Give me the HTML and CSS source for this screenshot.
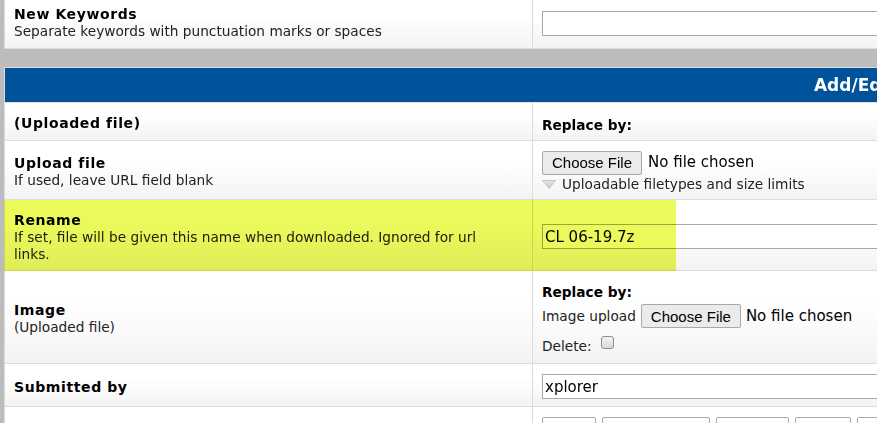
FILE: index.html
```html
<!DOCTYPE html>
<html lang="en">
<head>
    <meta charset="UTF-8">
    <meta name="viewport" content="width=device-width, initial-scale=1.0">
    <title>Add/Edit File</title>
    <link rel="stylesheet" href="styles.css">
</head>
<body>

    <!-- Keywords panel -->
    <div class="panel panel-top">
        <div class="row row-keywords">
            <div class="label">
                <span class="title">New Keywords</span>
                <span class="hint">Separate keywords with punctuation marks or spaces</span>
            </div>
            <div class="field">
                <input type="text" class="text-input">
            </div>
        </div>
    </div>

    <!-- File form panel -->
    <div class="panel">
        <div class="panel-head">Add/Edit File</div>

        <div class="row row-uploaded">
            <div class="label">
                <span class="title">(Uploaded file)</span>
            </div>
            <div class="field">
                <span class="title">Replace by:</span>
            </div>
        </div>

        <div class="row row-upload">
            <div class="label">
                <span class="title">Upload file</span>
                <span class="hint">If used, leave URL field blank</span>
            </div>
            <div class="field">
                <div class="file-pick">
                    <button type="button" class="btn">Choose File</button>
                    <span class="file-name">No file chosen</span>
                </div>
                <div class="toggle">
                    <svg width="14" height="9" viewBox="0 0 14 9">
                        <defs>
                            <linearGradient id="arrow" x1="0" y1="0" x2="0" y2="1">
                                <stop offset="0" stop-color="#e6e6e6"/>
                                <stop offset="1" stop-color="#c9c9c9"/>
                            </linearGradient>
                        </defs>
                        <polygon points="0.5,0.5 13.5,0.5 7,8.5" fill="url(#arrow)" stroke="#c4c4c4" stroke-width="1"/>
                    </svg>
                    <span>Uploadable filetypes and size limits</span>
                </div>
            </div>
        </div>

        <div class="row row-rename">
            <div class="label">
                <span class="title">Rename</span>
                <span class="hint">If set, file will be given this name when downloaded. Ignored for url links.</span>
            </div>
            <div class="field">
                <input type="text" class="text-input" value="CL 06-19.7z">
            </div>
            <div class="marker"></div>
        </div>

        <div class="row row-image">
            <div class="label">
                <span class="title">Image</span>
                <span class="hint">(Uploaded file)</span>
            </div>
            <div class="field field-stack">
                <span class="title">Replace by:</span>
                <div class="file-pick">
                    <span>Image upload</span>
                    <button type="button" class="btn">Choose File</button>
                    <span class="file-name">No file chosen</span>
                </div>
                <label class="delete">
                    <span>Delete:</span>
                    <input type="checkbox" class="check">
                </label>
            </div>
        </div>

        <div class="row row-submitted">
            <div class="label">
                <span class="title">Submitted by</span>
            </div>
            <div class="field">
                <input type="text" class="text-input" value="xplorer">
            </div>
        </div>

        <div class="row row-actions">
            <div class="label"></div>
            <div class="field actions">
                <button type="submit" class="btn btn-action">Save</button>
                <button type="submit" class="btn btn-action">Save &amp; close</button>
                <button type="button" class="btn btn-action">Preview</button>
                <button type="reset" class="btn btn-action">Clear</button>
                <button type="button" class="btn btn-action">Cancel</button>
            </div>
        </div>
    </div>

</body>
</html>
```

FILE: styles.css
```css
/* Basic reset */
* {
    margin: 0;
    padding: 0;
    box-sizing: border-box;
}

html, body {
    overflow: hidden;
}

body {
    padding-left: 4px;
    background-color: #bcbcbc;
    font-family: "DejaVu Sans", Verdana, sans-serif;
    font-size: 13.7px;
    line-height: 17px;
    color: #222;
}

/* Panels */
.panel {
    width: 1742px;
    background: #fff;
    border: 1px solid #dcdcdc;
}

.panel-top {
    margin-top: -3px;
}

.panel + .panel {
    margin-top: 18px;
}

.panel-head {
    height: 35px;
    line-height: 34px;
    background-color: #00529b;
    border-bottom: 1px solid #e4e4e4;
    color: #fff;
    font-size: 17px;
    font-weight: bold;
    text-align: center;
}

/* Form rows */
.row {
    position: relative;
    display: grid;
    grid-template-columns: 528px 1fr;
    border-bottom: 1px solid #dcdcdc;
}

.row:last-child {
    border-bottom: none;
}

.row-keywords { height: 50px; }
.row-uploaded { height: 38px; }
.row-upload { height: 59px; }
.row-rename { height: 71px; }
.row-image { height: 93px; }
.row-submitted { height: 43px; }
.row-actions { height: 45px; }

.label, .field {
    display: flex;
    flex-direction: column;
    justify-content: center;
    padding: 0 9px;
    background: linear-gradient(#fff 35%, #f3f3f3);
}

.label {
    padding: 4px 24px 0 9px;
    border-right: 1px solid #dcdcdc;
}

.label .title {
    font-size: 14px;
    letter-spacing: 0.6px;
}

.field {
    padding-top: 3px;
}

.row-keywords .label,
.row-keywords .field {
    padding-top: 0;
}

.row-uploaded .field {
    padding-top: 7px;
}

.title {
    font-weight: bold;
    color: #000;
}

/* Inputs */
.text-input {
    width: 100%;
    height: 25px;
    padding: 0 2px;
    border: 1px solid #a9a9a9;
    background: #fff;
    font-family: "DejaVu Sans", Verdana, sans-serif;
    font-size: 15px;
    color: #000;
}

.btn {
    height: 24px;
    padding: 0 9px;
    border: 1px solid #a9a9a9;
    border-radius: 2px;
    background-color: #ebebeb;
    font-family: "Liberation Sans", Arial, sans-serif;
    font-size: 15px;
    color: #000;
}

.file-pick {
    display: flex;
    align-items: center;
    gap: 6px;
}

.file-name {
    font-size: 15px;
    color: #000;
}

.toggle {
    display: flex;
    align-items: center;
    gap: 6px;
    margin-top: 1px;
}

/* Image row */
.field-stack {
    justify-content: flex-start;
    padding-top: 13px;
}

.field-stack .file-pick {
    gap: 5px;
    margin-top: 3px;
}

.delete {
    display: flex;
    align-items: flex-start;
    gap: 9px;
    margin-top: 10px;
}

.check {
    appearance: none;
    width: 13px;
    height: 13px;
    margin-top: -2px;
    border: 1px solid #8e8e8e;
    border-radius: 3px;
    background: linear-gradient(#f4f4f4, #d8d8d8);
}

/* Action buttons */
.actions {
    flex-direction: row;
    justify-content: flex-start;
    align-items: flex-start;
    gap: 6px;
    padding-top: 10px;
}

.btn-action {
    height: 26px;
    background: linear-gradient(#fff, #ececec);
}

/* Highlight over the rename row */
.marker {
    position: absolute;
    left: -1px;
    top: 0;
    width: 672px;
    height: calc(100% + 1px);
    background-color: #ecf95b;
    mix-blend-mode: multiply;
    pointer-events: none;
}
```
